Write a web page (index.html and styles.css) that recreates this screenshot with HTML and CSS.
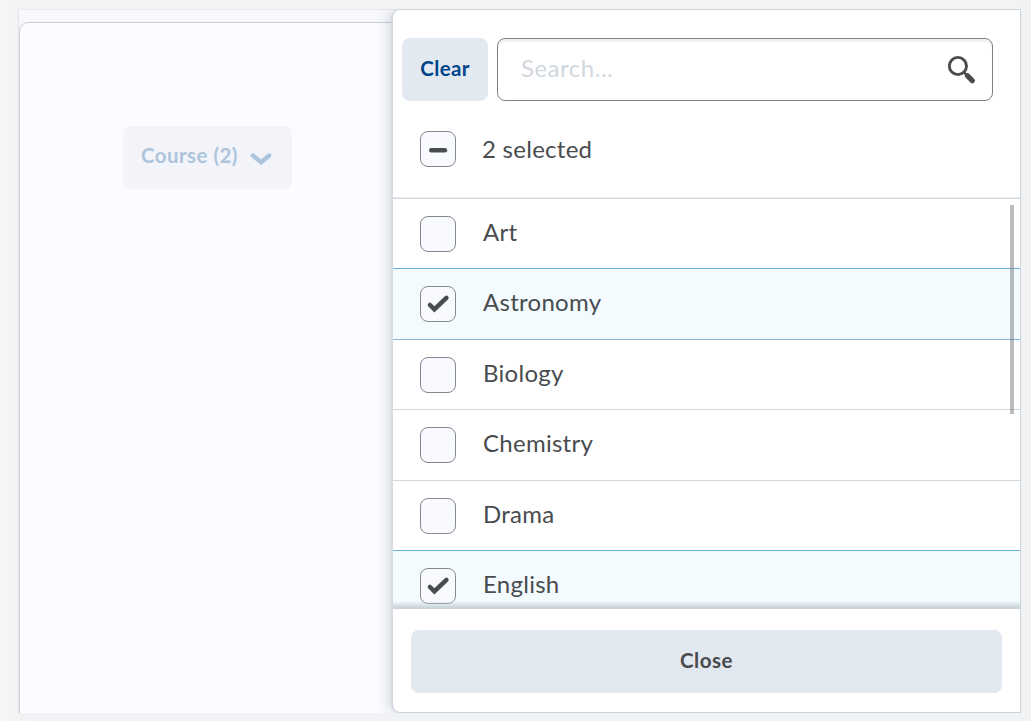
FILE: index.html
```html
<!DOCTYPE html>
<html lang="en">
<head>
<meta charset="utf-8">
<title>Course filter</title>
<link rel="stylesheet" href="styles.css">
</head>
<body>
<div class="window">
  <main class="page">
    <button class="course-button"><span>Course (2)</span>
      <svg width="24" height="16" viewBox="0 0 24 16"><path d="M3.8 4.5 12 11.3 20.2 4.5" fill="none" stroke="currentColor" stroke-width="4.4" stroke-linecap="round" stroke-linejoin="miter"/></svg>
    </button>
  </main>
  <section class="panel">
    <header class="tools">
      <button class="clear">Clear</button>
      <div class="search"><span>Search…</span>
        <svg width="30" height="30" viewBox="0 0 30 30"><circle cx="10.9" cy="11" r="8.6" fill="none" stroke="currentColor" stroke-width="2.9"/><path d="m16.5 16.8 3.5 3.5" stroke="currentColor" stroke-width="2.6"/><path d="m20.3 20.7 5 4.9" stroke="currentColor" stroke-width="5.2" stroke-linecap="round"/></svg>
      </div>
    </header>
    <div class="summary">
      <span class="box"><svg width="34" height="34" viewBox="0 0 34 34"><path d="M10.3 18.3h13.6" stroke="currentColor" stroke-width="4.6" stroke-linecap="round"/></svg></span>
      <span class="label">2 selected</span>
    </div>
    <div class="list">
      <div class="row"><span class="box"></span><span class="label">Art</span></div>
      <div class="row checked tall"><span class="box"><svg width="34" height="34" viewBox="0 0 34 34"><path d="m8.9 18 4.5 4.4L25.4 10.8" fill="none" stroke="currentColor" stroke-width="4.5" stroke-linecap="round"/></svg></span><span class="label">Astronomy</span></div>
      <div class="row after"><span class="box"></span><span class="label">Biology</span></div>
      <div class="row tall"><span class="box"></span><span class="label">Chemistry</span></div>
      <div class="row"><span class="box"></span><span class="label">Drama</span></div>
      <div class="row checked"><span class="box"><svg width="34" height="34" viewBox="0 0 34 34"><path d="m8.9 18 4.5 4.4L25.4 10.8" fill="none" stroke="currentColor" stroke-width="4.5" stroke-linecap="round"/></svg></span><span class="label">English</span></div>
      <i class="thumb"></i>
    </div>
    <footer class="footer"><button class="close">Close</button></footer>
  </section>
</div>
</body>
</html>
```
FILE: styles.css
```css
* { box-sizing: border-box; }
body {
  margin: 0;
  width: 1031px;
  height: 721px;
  padding: 9px 10px 8px 18px;
  overflow: hidden;
  font-family: Lato, sans-serif;
  color: #494c4e;
  background: linear-gradient(90deg, #f7f9f8 0, #f2f4f3 18px, #f1f2f4 30px, #f1f2f4 100%);
}
button { border: 0; font: inherit; padding: 0; }
svg { display: block; flex: none; }
.window { display: flex; height: 704px; background: #f8f9fe; box-shadow: 0 -9px 0 #f2f3f2; border-left: 1px solid #e4e6ea; border-top: 1px solid #e9ebef; }
.page {
  flex: none;
  width: 372px;
  margin-top: 12px;
  padding: 103px 0 0 103px;
  border: solid #cdcfd5;
  border-width: 1px 0 0 1px;
  border-radius: 9px 0 0 0;
  background: #fbfcff;
}
.course-button {
  display: flex;
  align-items: center;
  width: 169px;
  height: 63px;
  padding: 0 0 2px 18px;
  border-radius: 8px;
  background: #f3f4f9;
  color: #adc4dd;
  font-size: 20.5px;
  font-weight: 700;
  letter-spacing: .45px;
}
.course-button span { position: relative; top: -2px; width: 108px; text-align: left; white-space: nowrap; }
.course-button svg { position: relative; top: 2px; }
.panel {
  position: relative;
  flex: none;
  display: flex;
  flex-direction: column;
  width: 630px;
  height: 704px;
  margin-top: -1px;
  border: 1px solid #cdd5dc;
  border-left: 2px solid #d5dbe1;
  border-radius: 9px 0 0 9px;
  background: #fff;
  box-shadow: -2px 0 14px rgba(50, 60, 80, .2);
  clip-path: inset(0 0 0 -30px);
}
.tools { flex: none; display: flex; gap: 9px; padding: 28px 0 0 9px; height: 92px; }
.clear { width: 86px; height: 63px; padding-bottom: 4px; border-radius: 8px; background: #e3e9f1; color: #004489; font-size: 20.5px; font-weight: 700; letter-spacing: .4px; }
.search {
  display: flex;
  align-items: center;
  justify-content: space-between;
  width: 496px;
  height: 63px;
  padding: 0 15px 2px 23px;
  border: 1px solid #7c8085;
  border-radius: 8px;
  box-shadow: inset 0 3px 0 #f1f2f4;
  color: #d0d7df;
  font-size: 24px;
  letter-spacing: .5px;
}
.search span { position: relative; top: -1px; }
.search svg { color: #494c4e; position: relative; top: 1px; }
.summary { flex: none; display: flex; align-items: flex-start; height: 95px; padding: 29px 0 0 27px; }
.box { flex: none; width: 36px; height: 36px; border: 1px solid #85888d; border-radius: 8px; background: #f9faff; }
.label { margin: -2px 0 0 27px; font-size: 24px; line-height: 36px; letter-spacing: .27px; }
.summary .label { margin: 0 0 0 26px; }
.list { position: relative; flex: none; height: 411px; overflow: hidden; border-top: 1px solid #e7ebef; }
.list::after { content: ""; position: absolute; inset: auto 0 0; height: 7px; background: linear-gradient(transparent, #c8d1d5); }
.row { display: flex; height: 70px; padding: 17px 0 0 27px; border-top: 1px solid #d0d7dd; }
.row.tall { height: 71px; }
.row.checked { background: #f3fbff; border-top-color: #69b1df; }
.row.after { border-top-color: #82b7dd; }
.thumb { position: absolute; top: 7px; right: 6px; width: 4px; height: 209px; background: rgba(110, 110, 110, .46); }
.footer { flex: none; height: 104px; padding: 21px 18px 0; border-top: 1px solid #c8d3dc; }
.close { display: block; width: 591px; height: 63px; padding-bottom: 3px; border-radius: 8px; background: #e2e8f0; color: #494c4e; font-size: 20.5px; font-weight: 700; letter-spacing: .5px; }
```
